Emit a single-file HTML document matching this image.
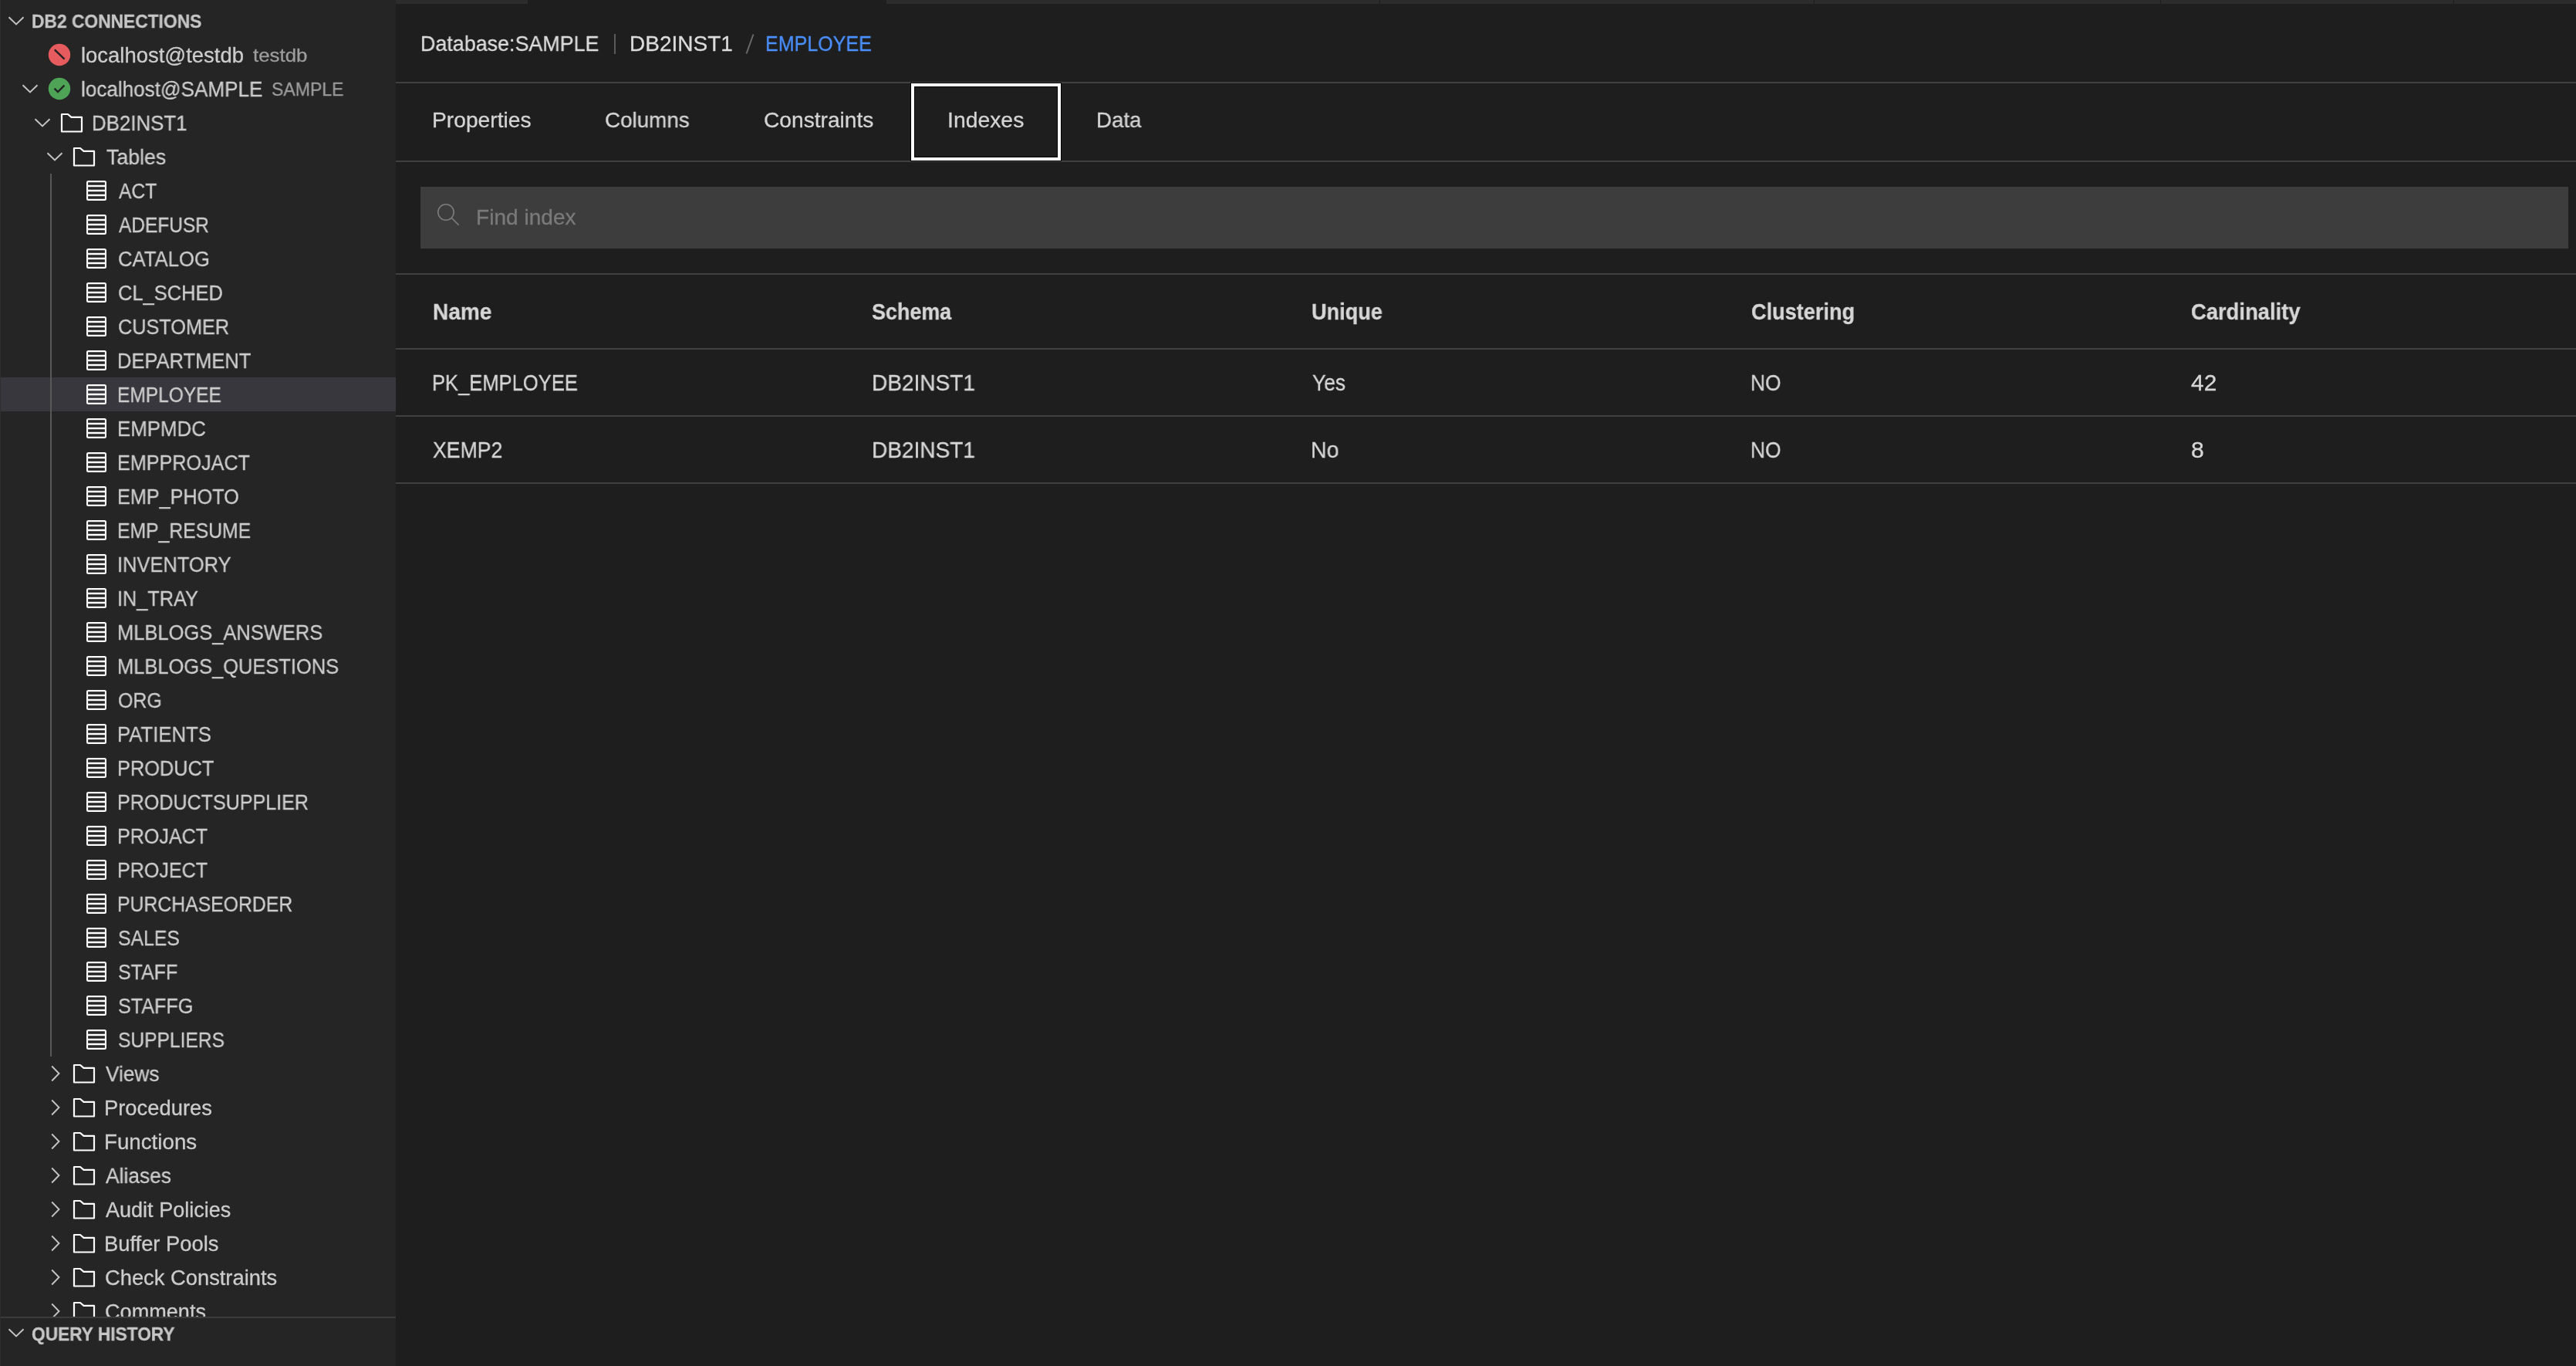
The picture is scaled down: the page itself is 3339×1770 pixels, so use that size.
<!DOCTYPE html>
<html><head><meta charset="utf-8"><style>
*{margin:0;padding:0;box-sizing:border-box}
html,body{width:3339px;height:1770px;overflow:hidden;background:#1e1e1e;font-family:"Liberation Sans",sans-serif}
i{font-style:normal}
.abs{position:absolute;display:block;line-height:0}
.box{position:absolute;display:block}
.t{position:absolute;white-space:nowrap;will-change:transform;-webkit-text-stroke:0.3px currentColor}
#side{position:absolute;left:0;top:0;width:513px;height:1770px;background:#252526;overflow:hidden}
#sideb{position:absolute;left:0;top:0;width:1px;height:1770px;background:#2f2f2f}
#tree{position:absolute;left:0;top:0;width:513px;height:1706px;overflow:hidden}
.row{position:absolute;left:1px;width:512px;height:44px}
.row.sel{background:#37373d}
.row .abs{margin-left:-1px}
.lbl{-webkit-text-stroke:0.3px currentColor;will-change:transform;position:absolute;top:0;height:44px;line-height:44px;font-size:27px;color:#cccccc;padding-top:1px;white-space:nowrap;margin-left:-1px}
.lbl.desc{font-size:24px;color:#9d9d9d}
.hdr{position:absolute;left:0;width:513px;height:44px}
.hdr .h{-webkit-text-stroke:0.3px currentColor;will-change:transform;position:absolute;left:42px;top:0;line-height:44px;font-size:23px;font-weight:bold;color:#c6c6c6;padding-top:1px;white-space:nowrap}
#guide{position:absolute;left:65px;top:225px;width:2px;height:1144px;background:#585858}
#qh{position:absolute;left:0;top:1706px;width:513px;height:64px;border-top:2px solid #3c3c3c}
</style></head><body>
<div id="side">
  <div id="tree">
    <div class="hdr" style="top:5px"><i class="abs" style="left:10px;top:16px"><svg width="22" height="12" viewBox="0 0 22 12"><path d="M1.5 1.2 L11 10.5 L20.5 1.2" fill="none" stroke="#c5c5c5" stroke-width="1.9"/></svg></i><span class="h" style="transform:scaleX(0.991);transform-origin:0 0;margin-left:-1.0px">DB2 CONNECTIONS</span></div>
<div class="row" style="top:49px"><i class="abs" style="left:62px;top:7px"><svg width="30" height="30" viewBox="0 0 30 30"><circle cx="15" cy="15" r="14.2" fill="#e65b5e"/><path d="M8.8 8.4 L21.6 20.6" stroke="#222" stroke-width="2.4"/></svg></i><span class="lbl" style="left:105.0px;transform:scaleX(1.0166);transform-origin:0 0;">localhost@testdb</span><span class="lbl desc" style="left:328.0px;transform:scaleX(1.0769);transform-origin:0 0;">testdb</span></div>
<div class="row" style="top:93px"><i class="abs" style="left:28px;top:16px"><svg width="22" height="12" viewBox="0 0 22 12"><path d="M1.5 1.2 L11 10.5 L20.5 1.2" fill="none" stroke="#c5c5c5" stroke-width="1.9"/></svg></i><i class="abs" style="left:62px;top:7px"><svg width="30" height="30" viewBox="0 0 30 30"><circle cx="15" cy="15" r="14.2" fill="#4ea357"/><path d="M8.6 14.6 L13 19 L21.4 10.6" fill="none" stroke="#222" stroke-width="2.3"/></svg></i><span class="lbl" style="left:105.0px;transform:scaleX(0.9667);transform-origin:0 0;">localhost@SAMPLE</span><span class="lbl desc" style="left:352.4px;transform:scaleX(0.9605);transform-origin:0 0;">SAMPLE</span></div>
<div class="row" style="top:137px"><i class="abs" style="left:44px;top:16px"><svg width="22" height="12" viewBox="0 0 22 12"><path d="M1.5 1.2 L11 10.5 L20.5 1.2" fill="none" stroke="#c5c5c5" stroke-width="1.9"/></svg></i><i class="abs" style="left:78px;top:9px"><svg width="30" height="26" viewBox="0 0 30 26"><path d="M2 2 H10 L14.5 5.8 H28 V24.5 H2 Z" fill="none" stroke="#fff" stroke-width="2.2" stroke-linejoin="round"/></svg></i><span class="lbl" style="left:119.0px;transform:scaleX(0.9572);transform-origin:0 0;">DB2INST1</span></div>
<div class="row" style="top:181px"><i class="abs" style="left:60px;top:16px"><svg width="22" height="12" viewBox="0 0 22 12"><path d="M1.5 1.2 L11 10.5 L20.5 1.2" fill="none" stroke="#c5c5c5" stroke-width="1.9"/></svg></i><i class="abs" style="left:94px;top:9px"><svg width="30" height="26" viewBox="0 0 30 26"><path d="M2 2 H10 L14.5 5.8 H28 V24.5 H2 Z" fill="none" stroke="#fff" stroke-width="2.2" stroke-linejoin="round"/></svg></i><span class="lbl" style="left:137.8px;transform:scaleX(0.9897);transform-origin:0 0;">Tables</span></div>
<div class="row" style="top:225px"><i class="abs" style="left:112px;top:9px"><svg width="26" height="26" viewBox="0 0 26 26"><path fill="#fff" fill-rule="evenodd" d="M2.5 0H23.5A2.5 2.5 0 0 1 26 2.5V23.5A2.5 2.5 0 0 1 23.5 26H2.5A2.5 2.5 0 0 1 0 23.5V2.5A2.5 2.5 0 0 1 2.5 0ZM2.1 2.2H23.9V5.7H2.1ZM2.1 8.2H23.9V11.7H2.1ZM2.1 14.25H23.9V17.7H2.1ZM2.1 20.2H23.9V23.8H2.1Z"/></svg></i><span class="lbl" style="left:154.0px;transform:scaleX(0.9112);transform-origin:0 0;">ACT</span></div>
<div class="row" style="top:269px"><i class="abs" style="left:112px;top:9px"><svg width="26" height="26" viewBox="0 0 26 26"><path fill="#fff" fill-rule="evenodd" d="M2.5 0H23.5A2.5 2.5 0 0 1 26 2.5V23.5A2.5 2.5 0 0 1 23.5 26H2.5A2.5 2.5 0 0 1 0 23.5V2.5A2.5 2.5 0 0 1 2.5 0ZM2.1 2.2H23.9V5.7H2.1ZM2.1 8.2H23.9V11.7H2.1ZM2.1 14.25H23.9V17.7H2.1ZM2.1 20.2H23.9V23.8H2.1Z"/></svg></i><span class="lbl" style="left:154.0px;transform:scaleX(0.9062);transform-origin:0 0;">ADEFUSR</span></div>
<div class="row" style="top:313px"><i class="abs" style="left:112px;top:9px"><svg width="26" height="26" viewBox="0 0 26 26"><path fill="#fff" fill-rule="evenodd" d="M2.5 0H23.5A2.5 2.5 0 0 1 26 2.5V23.5A2.5 2.5 0 0 1 23.5 26H2.5A2.5 2.5 0 0 1 0 23.5V2.5A2.5 2.5 0 0 1 2.5 0ZM2.1 2.2H23.9V5.7H2.1ZM2.1 8.2H23.9V11.7H2.1ZM2.1 14.25H23.9V17.7H2.1ZM2.1 20.2H23.9V23.8H2.1Z"/></svg></i><span class="lbl" style="left:153.0px;transform:scaleX(0.9508);transform-origin:0 0;">CATALOG</span></div>
<div class="row" style="top:357px"><i class="abs" style="left:112px;top:9px"><svg width="26" height="26" viewBox="0 0 26 26"><path fill="#fff" fill-rule="evenodd" d="M2.5 0H23.5A2.5 2.5 0 0 1 26 2.5V23.5A2.5 2.5 0 0 1 23.5 26H2.5A2.5 2.5 0 0 1 0 23.5V2.5A2.5 2.5 0 0 1 2.5 0ZM2.1 2.2H23.9V5.7H2.1ZM2.1 8.2H23.9V11.7H2.1ZM2.1 14.25H23.9V17.7H2.1ZM2.1 20.2H23.9V23.8H2.1Z"/></svg></i><span class="lbl" style="left:153.0px;transform:scaleX(0.9437);transform-origin:0 0;">CL_SCHED</span></div>
<div class="row" style="top:401px"><i class="abs" style="left:112px;top:9px"><svg width="26" height="26" viewBox="0 0 26 26"><path fill="#fff" fill-rule="evenodd" d="M2.5 0H23.5A2.5 2.5 0 0 1 26 2.5V23.5A2.5 2.5 0 0 1 23.5 26H2.5A2.5 2.5 0 0 1 0 23.5V2.5A2.5 2.5 0 0 1 2.5 0ZM2.1 2.2H23.9V5.7H2.1ZM2.1 8.2H23.9V11.7H2.1ZM2.1 14.25H23.9V17.7H2.1ZM2.1 20.2H23.9V23.8H2.1Z"/></svg></i><span class="lbl" style="left:153.0px;transform:scaleX(0.9356);transform-origin:0 0;">CUSTOMER</span></div>
<div class="row" style="top:445px"><i class="abs" style="left:112px;top:9px"><svg width="26" height="26" viewBox="0 0 26 26"><path fill="#fff" fill-rule="evenodd" d="M2.5 0H23.5A2.5 2.5 0 0 1 26 2.5V23.5A2.5 2.5 0 0 1 23.5 26H2.5A2.5 2.5 0 0 1 0 23.5V2.5A2.5 2.5 0 0 1 2.5 0ZM2.1 2.2H23.9V5.7H2.1ZM2.1 8.2H23.9V11.7H2.1ZM2.1 14.25H23.9V17.7H2.1ZM2.1 20.2H23.9V23.8H2.1Z"/></svg></i><span class="lbl" style="left:152.0px;transform:scaleX(0.9448);transform-origin:0 0;">DEPARTMENT</span></div>
<div class="row sel" style="top:489px"><i class="abs" style="left:112px;top:9px"><svg width="26" height="26" viewBox="0 0 26 26"><path fill="#fff" fill-rule="evenodd" d="M2.5 0H23.5A2.5 2.5 0 0 1 26 2.5V23.5A2.5 2.5 0 0 1 23.5 26H2.5A2.5 2.5 0 0 1 0 23.5V2.5A2.5 2.5 0 0 1 2.5 0ZM2.1 2.2H23.9V5.7H2.1ZM2.1 8.2H23.9V11.7H2.1ZM2.1 14.25H23.9V17.7H2.1ZM2.1 20.2H23.9V23.8H2.1Z"/></svg></i><span class="lbl" style="left:152.0px;transform:scaleX(0.9081);transform-origin:0 0;">EMPLOYEE</span></div>
<div class="row" style="top:533px"><i class="abs" style="left:112px;top:9px"><svg width="26" height="26" viewBox="0 0 26 26"><path fill="#fff" fill-rule="evenodd" d="M2.5 0H23.5A2.5 2.5 0 0 1 26 2.5V23.5A2.5 2.5 0 0 1 23.5 26H2.5A2.5 2.5 0 0 1 0 23.5V2.5A2.5 2.5 0 0 1 2.5 0ZM2.1 2.2H23.9V5.7H2.1ZM2.1 8.2H23.9V11.7H2.1ZM2.1 14.25H23.9V17.7H2.1ZM2.1 20.2H23.9V23.8H2.1Z"/></svg></i><span class="lbl" style="left:152.0px;transform:scaleX(0.9572);transform-origin:0 0;">EMPMDC</span></div>
<div class="row" style="top:577px"><i class="abs" style="left:112px;top:9px"><svg width="26" height="26" viewBox="0 0 26 26"><path fill="#fff" fill-rule="evenodd" d="M2.5 0H23.5A2.5 2.5 0 0 1 26 2.5V23.5A2.5 2.5 0 0 1 23.5 26H2.5A2.5 2.5 0 0 1 0 23.5V2.5A2.5 2.5 0 0 1 2.5 0ZM2.1 2.2H23.9V5.7H2.1ZM2.1 8.2H23.9V11.7H2.1ZM2.1 14.25H23.9V17.7H2.1ZM2.1 20.2H23.9V23.8H2.1Z"/></svg></i><span class="lbl" style="left:152.0px;transform:scaleX(0.932);transform-origin:0 0;">EMPPROJACT</span></div>
<div class="row" style="top:621px"><i class="abs" style="left:112px;top:9px"><svg width="26" height="26" viewBox="0 0 26 26"><path fill="#fff" fill-rule="evenodd" d="M2.5 0H23.5A2.5 2.5 0 0 1 26 2.5V23.5A2.5 2.5 0 0 1 23.5 26H2.5A2.5 2.5 0 0 1 0 23.5V2.5A2.5 2.5 0 0 1 2.5 0ZM2.1 2.2H23.9V5.7H2.1ZM2.1 8.2H23.9V11.7H2.1ZM2.1 14.25H23.9V17.7H2.1ZM2.1 20.2H23.9V23.8H2.1Z"/></svg></i><span class="lbl" style="left:152.0px;transform:scaleX(0.9337);transform-origin:0 0;">EMP_PHOTO</span></div>
<div class="row" style="top:665px"><i class="abs" style="left:112px;top:9px"><svg width="26" height="26" viewBox="0 0 26 26"><path fill="#fff" fill-rule="evenodd" d="M2.5 0H23.5A2.5 2.5 0 0 1 26 2.5V23.5A2.5 2.5 0 0 1 23.5 26H2.5A2.5 2.5 0 0 1 0 23.5V2.5A2.5 2.5 0 0 1 2.5 0ZM2.1 2.2H23.9V5.7H2.1ZM2.1 8.2H23.9V11.7H2.1ZM2.1 14.25H23.9V17.7H2.1ZM2.1 20.2H23.9V23.8H2.1Z"/></svg></i><span class="lbl" style="left:152.0px;transform:scaleX(0.9162);transform-origin:0 0;">EMP_RESUME</span></div>
<div class="row" style="top:709px"><i class="abs" style="left:112px;top:9px"><svg width="26" height="26" viewBox="0 0 26 26"><path fill="#fff" fill-rule="evenodd" d="M2.5 0H23.5A2.5 2.5 0 0 1 26 2.5V23.5A2.5 2.5 0 0 1 23.5 26H2.5A2.5 2.5 0 0 1 0 23.5V2.5A2.5 2.5 0 0 1 2.5 0ZM2.1 2.2H23.9V5.7H2.1ZM2.1 8.2H23.9V11.7H2.1ZM2.1 14.25H23.9V17.7H2.1ZM2.1 20.2H23.9V23.8H2.1Z"/></svg></i><span class="lbl" style="left:152.0px;transform:scaleX(0.9429);transform-origin:0 0;">INVENTORY</span></div>
<div class="row" style="top:753px"><i class="abs" style="left:112px;top:9px"><svg width="26" height="26" viewBox="0 0 26 26"><path fill="#fff" fill-rule="evenodd" d="M2.5 0H23.5A2.5 2.5 0 0 1 26 2.5V23.5A2.5 2.5 0 0 1 23.5 26H2.5A2.5 2.5 0 0 1 0 23.5V2.5A2.5 2.5 0 0 1 2.5 0ZM2.1 2.2H23.9V5.7H2.1ZM2.1 8.2H23.9V11.7H2.1ZM2.1 14.25H23.9V17.7H2.1ZM2.1 20.2H23.9V23.8H2.1Z"/></svg></i><span class="lbl" style="left:152.0px;transform:scaleX(0.9364);transform-origin:0 0;">IN_TRAY</span></div>
<div class="row" style="top:797px"><i class="abs" style="left:112px;top:9px"><svg width="26" height="26" viewBox="0 0 26 26"><path fill="#fff" fill-rule="evenodd" d="M2.5 0H23.5A2.5 2.5 0 0 1 26 2.5V23.5A2.5 2.5 0 0 1 23.5 26H2.5A2.5 2.5 0 0 1 0 23.5V2.5A2.5 2.5 0 0 1 2.5 0ZM2.1 2.2H23.9V5.7H2.1ZM2.1 8.2H23.9V11.7H2.1ZM2.1 14.25H23.9V17.7H2.1ZM2.1 20.2H23.9V23.8H2.1Z"/></svg></i><span class="lbl" style="left:152.0px;transform:scaleX(0.9442);transform-origin:0 0;">MLBLOGS_ANSWERS</span></div>
<div class="row" style="top:841px"><i class="abs" style="left:112px;top:9px"><svg width="26" height="26" viewBox="0 0 26 26"><path fill="#fff" fill-rule="evenodd" d="M2.5 0H23.5A2.5 2.5 0 0 1 26 2.5V23.5A2.5 2.5 0 0 1 23.5 26H2.5A2.5 2.5 0 0 1 0 23.5V2.5A2.5 2.5 0 0 1 2.5 0ZM2.1 2.2H23.9V5.7H2.1ZM2.1 8.2H23.9V11.7H2.1ZM2.1 14.25H23.9V17.7H2.1ZM2.1 20.2H23.9V23.8H2.1Z"/></svg></i><span class="lbl" style="left:152.0px;transform:scaleX(0.943);transform-origin:0 0;">MLBLOGS_QUESTIONS</span></div>
<div class="row" style="top:885px"><i class="abs" style="left:112px;top:9px"><svg width="26" height="26" viewBox="0 0 26 26"><path fill="#fff" fill-rule="evenodd" d="M2.5 0H23.5A2.5 2.5 0 0 1 26 2.5V23.5A2.5 2.5 0 0 1 23.5 26H2.5A2.5 2.5 0 0 1 0 23.5V2.5A2.5 2.5 0 0 1 2.5 0ZM2.1 2.2H23.9V5.7H2.1ZM2.1 8.2H23.9V11.7H2.1ZM2.1 14.25H23.9V17.7H2.1ZM2.1 20.2H23.9V23.8H2.1Z"/></svg></i><span class="lbl" style="left:153.0px;transform:scaleX(0.9221);transform-origin:0 0;">ORG</span></div>
<div class="row" style="top:929px"><i class="abs" style="left:112px;top:9px"><svg width="26" height="26" viewBox="0 0 26 26"><path fill="#fff" fill-rule="evenodd" d="M2.5 0H23.5A2.5 2.5 0 0 1 26 2.5V23.5A2.5 2.5 0 0 1 23.5 26H2.5A2.5 2.5 0 0 1 0 23.5V2.5A2.5 2.5 0 0 1 2.5 0ZM2.1 2.2H23.9V5.7H2.1ZM2.1 8.2H23.9V11.7H2.1ZM2.1 14.25H23.9V17.7H2.1ZM2.1 20.2H23.9V23.8H2.1Z"/></svg></i><span class="lbl" style="left:152.0px;transform:scaleX(0.952);transform-origin:0 0;">PATIENTS</span></div>
<div class="row" style="top:973px"><i class="abs" style="left:112px;top:9px"><svg width="26" height="26" viewBox="0 0 26 26"><path fill="#fff" fill-rule="evenodd" d="M2.5 0H23.5A2.5 2.5 0 0 1 26 2.5V23.5A2.5 2.5 0 0 1 23.5 26H2.5A2.5 2.5 0 0 1 0 23.5V2.5A2.5 2.5 0 0 1 2.5 0ZM2.1 2.2H23.9V5.7H2.1ZM2.1 8.2H23.9V11.7H2.1ZM2.1 14.25H23.9V17.7H2.1ZM2.1 20.2H23.9V23.8H2.1Z"/></svg></i><span class="lbl" style="left:152.0px;transform:scaleX(0.9389);transform-origin:0 0;">PRODUCT</span></div>
<div class="row" style="top:1017px"><i class="abs" style="left:112px;top:9px"><svg width="26" height="26" viewBox="0 0 26 26"><path fill="#fff" fill-rule="evenodd" d="M2.5 0H23.5A2.5 2.5 0 0 1 26 2.5V23.5A2.5 2.5 0 0 1 23.5 26H2.5A2.5 2.5 0 0 1 0 23.5V2.5A2.5 2.5 0 0 1 2.5 0ZM2.1 2.2H23.9V5.7H2.1ZM2.1 8.2H23.9V11.7H2.1ZM2.1 14.25H23.9V17.7H2.1ZM2.1 20.2H23.9V23.8H2.1Z"/></svg></i><span class="lbl" style="left:152.0px;transform:scaleX(0.9287);transform-origin:0 0;">PRODUCTSUPPLIER</span></div>
<div class="row" style="top:1061px"><i class="abs" style="left:112px;top:9px"><svg width="26" height="26" viewBox="0 0 26 26"><path fill="#fff" fill-rule="evenodd" d="M2.5 0H23.5A2.5 2.5 0 0 1 26 2.5V23.5A2.5 2.5 0 0 1 23.5 26H2.5A2.5 2.5 0 0 1 0 23.5V2.5A2.5 2.5 0 0 1 2.5 0ZM2.1 2.2H23.9V5.7H2.1ZM2.1 8.2H23.9V11.7H2.1ZM2.1 14.25H23.9V17.7H2.1ZM2.1 20.2H23.9V23.8H2.1Z"/></svg></i><span class="lbl" style="left:152.0px;transform:scaleX(0.9291);transform-origin:0 0;">PROJACT</span></div>
<div class="row" style="top:1105px"><i class="abs" style="left:112px;top:9px"><svg width="26" height="26" viewBox="0 0 26 26"><path fill="#fff" fill-rule="evenodd" d="M2.5 0H23.5A2.5 2.5 0 0 1 26 2.5V23.5A2.5 2.5 0 0 1 23.5 26H2.5A2.5 2.5 0 0 1 0 23.5V2.5A2.5 2.5 0 0 1 2.5 0ZM2.1 2.2H23.9V5.7H2.1ZM2.1 8.2H23.9V11.7H2.1ZM2.1 14.25H23.9V17.7H2.1ZM2.1 20.2H23.9V23.8H2.1Z"/></svg></i><span class="lbl" style="left:152.0px;transform:scaleX(0.9291);transform-origin:0 0;">PROJECT</span></div>
<div class="row" style="top:1149px"><i class="abs" style="left:112px;top:9px"><svg width="26" height="26" viewBox="0 0 26 26"><path fill="#fff" fill-rule="evenodd" d="M2.5 0H23.5A2.5 2.5 0 0 1 26 2.5V23.5A2.5 2.5 0 0 1 23.5 26H2.5A2.5 2.5 0 0 1 0 23.5V2.5A2.5 2.5 0 0 1 2.5 0ZM2.1 2.2H23.9V5.7H2.1ZM2.1 8.2H23.9V11.7H2.1ZM2.1 14.25H23.9V17.7H2.1ZM2.1 20.2H23.9V23.8H2.1Z"/></svg></i><span class="lbl" style="left:152.0px;transform:scaleX(0.9181);transform-origin:0 0;">PURCHASEORDER</span></div>
<div class="row" style="top:1193px"><i class="abs" style="left:112px;top:9px"><svg width="26" height="26" viewBox="0 0 26 26"><path fill="#fff" fill-rule="evenodd" d="M2.5 0H23.5A2.5 2.5 0 0 1 26 2.5V23.5A2.5 2.5 0 0 1 23.5 26H2.5A2.5 2.5 0 0 1 0 23.5V2.5A2.5 2.5 0 0 1 2.5 0ZM2.1 2.2H23.9V5.7H2.1ZM2.1 8.2H23.9V11.7H2.1ZM2.1 14.25H23.9V17.7H2.1ZM2.1 20.2H23.9V23.8H2.1Z"/></svg></i><span class="lbl" style="left:153.0px;transform:scaleX(0.9178);transform-origin:0 0;">SALES</span></div>
<div class="row" style="top:1237px"><i class="abs" style="left:112px;top:9px"><svg width="26" height="26" viewBox="0 0 26 26"><path fill="#fff" fill-rule="evenodd" d="M2.5 0H23.5A2.5 2.5 0 0 1 26 2.5V23.5A2.5 2.5 0 0 1 23.5 26H2.5A2.5 2.5 0 0 1 0 23.5V2.5A2.5 2.5 0 0 1 2.5 0ZM2.1 2.2H23.9V5.7H2.1ZM2.1 8.2H23.9V11.7H2.1ZM2.1 14.25H23.9V17.7H2.1ZM2.1 20.2H23.9V23.8H2.1Z"/></svg></i><span class="lbl" style="left:153.0px;transform:scaleX(0.9245);transform-origin:0 0;">STAFF</span></div>
<div class="row" style="top:1281px"><i class="abs" style="left:112px;top:9px"><svg width="26" height="26" viewBox="0 0 26 26"><path fill="#fff" fill-rule="evenodd" d="M2.5 0H23.5A2.5 2.5 0 0 1 26 2.5V23.5A2.5 2.5 0 0 1 23.5 26H2.5A2.5 2.5 0 0 1 0 23.5V2.5A2.5 2.5 0 0 1 2.5 0ZM2.1 2.2H23.9V5.7H2.1ZM2.1 8.2H23.9V11.7H2.1ZM2.1 14.25H23.9V17.7H2.1ZM2.1 20.2H23.9V23.8H2.1Z"/></svg></i><span class="lbl" style="left:153.0px;transform:scaleX(0.9314);transform-origin:0 0;">STAFFG</span></div>
<div class="row" style="top:1325px"><i class="abs" style="left:112px;top:9px"><svg width="26" height="26" viewBox="0 0 26 26"><path fill="#fff" fill-rule="evenodd" d="M2.5 0H23.5A2.5 2.5 0 0 1 26 2.5V23.5A2.5 2.5 0 0 1 23.5 26H2.5A2.5 2.5 0 0 1 0 23.5V2.5A2.5 2.5 0 0 1 2.5 0ZM2.1 2.2H23.9V5.7H2.1ZM2.1 8.2H23.9V11.7H2.1ZM2.1 14.25H23.9V17.7H2.1ZM2.1 20.2H23.9V23.8H2.1Z"/></svg></i><span class="lbl" style="left:153.0px;transform:scaleX(0.9107);transform-origin:0 0;">SUPPLIERS</span></div>
<div class="row" style="top:1369px"><i class="abs" style="left:66px;top:11px"><svg width="12" height="22" viewBox="0 0 12 22"><path d="M1.2 1.5 L10.5 11 L1.2 20.5" fill="none" stroke="#c5c5c5" stroke-width="1.9"/></svg></i><i class="abs" style="left:94px;top:9px"><svg width="30" height="26" viewBox="0 0 30 26"><path d="M2 2 H10 L14.5 5.8 H28 V24.5 H2 Z" fill="none" stroke="#fff" stroke-width="2.2" stroke-linejoin="round"/></svg></i><span class="lbl" style="left:137.0px;transform:scaleX(0.9719);transform-origin:0 0;">Views</span></div>
<div class="row" style="top:1413px"><i class="abs" style="left:66px;top:11px"><svg width="12" height="22" viewBox="0 0 12 22"><path d="M1.2 1.5 L10.5 11 L1.2 20.5" fill="none" stroke="#c5c5c5" stroke-width="1.9"/></svg></i><i class="abs" style="left:94px;top:9px"><svg width="30" height="26" viewBox="0 0 30 26"><path d="M2 2 H10 L14.5 5.8 H28 V24.5 H2 Z" fill="none" stroke="#fff" stroke-width="2.2" stroke-linejoin="round"/></svg></i><span class="lbl" style="left:135.0px;transform:scaleX(1.0134);transform-origin:0 0;">Procedures</span></div>
<div class="row" style="top:1457px"><i class="abs" style="left:66px;top:11px"><svg width="12" height="22" viewBox="0 0 12 22"><path d="M1.2 1.5 L10.5 11 L1.2 20.5" fill="none" stroke="#c5c5c5" stroke-width="1.9"/></svg></i><i class="abs" style="left:94px;top:9px"><svg width="30" height="26" viewBox="0 0 30 26"><path d="M2 2 H10 L14.5 5.8 H28 V24.5 H2 Z" fill="none" stroke="#fff" stroke-width="2.2" stroke-linejoin="round"/></svg></i><span class="lbl" style="left:135.0px;transform:scaleX(1.0264);transform-origin:0 0;">Functions</span></div>
<div class="row" style="top:1501px"><i class="abs" style="left:66px;top:11px"><svg width="12" height="22" viewBox="0 0 12 22"><path d="M1.2 1.5 L10.5 11 L1.2 20.5" fill="none" stroke="#c5c5c5" stroke-width="1.9"/></svg></i><i class="abs" style="left:94px;top:9px"><svg width="30" height="26" viewBox="0 0 30 26"><path d="M2 2 H10 L14.5 5.8 H28 V24.5 H2 Z" fill="none" stroke="#fff" stroke-width="2.2" stroke-linejoin="round"/></svg></i><span class="lbl" style="left:137.0px;transform:scaleX(0.9768);transform-origin:0 0;">Aliases</span></div>
<div class="row" style="top:1545px"><i class="abs" style="left:66px;top:11px"><svg width="12" height="22" viewBox="0 0 12 22"><path d="M1.2 1.5 L10.5 11 L1.2 20.5" fill="none" stroke="#c5c5c5" stroke-width="1.9"/></svg></i><i class="abs" style="left:94px;top:9px"><svg width="30" height="26" viewBox="0 0 30 26"><path d="M2 2 H10 L14.5 5.8 H28 V24.5 H2 Z" fill="none" stroke="#fff" stroke-width="2.2" stroke-linejoin="round"/></svg></i><span class="lbl" style="left:137.0px;transform:scaleX(1.0014);transform-origin:0 0;">Audit Policies</span></div>
<div class="row" style="top:1589px"><i class="abs" style="left:66px;top:11px"><svg width="12" height="22" viewBox="0 0 12 22"><path d="M1.2 1.5 L10.5 11 L1.2 20.5" fill="none" stroke="#c5c5c5" stroke-width="1.9"/></svg></i><i class="abs" style="left:94px;top:9px"><svg width="30" height="26" viewBox="0 0 30 26"><path d="M2 2 H10 L14.5 5.8 H28 V24.5 H2 Z" fill="none" stroke="#fff" stroke-width="2.2" stroke-linejoin="round"/></svg></i><span class="lbl" style="left:135.0px;transform:scaleX(1.0126);transform-origin:0 0;">Buffer Pools</span></div>
<div class="row" style="top:1633px"><i class="abs" style="left:66px;top:11px"><svg width="12" height="22" viewBox="0 0 12 22"><path d="M1.2 1.5 L10.5 11 L1.2 20.5" fill="none" stroke="#c5c5c5" stroke-width="1.9"/></svg></i><i class="abs" style="left:94px;top:9px"><svg width="30" height="26" viewBox="0 0 30 26"><path d="M2 2 H10 L14.5 5.8 H28 V24.5 H2 Z" fill="none" stroke="#fff" stroke-width="2.2" stroke-linejoin="round"/></svg></i><span class="lbl" style="left:136.0px;transform:scaleX(1.0117);transform-origin:0 0;">Check Constraints</span></div>
<div class="row" style="top:1677px"><i class="abs" style="left:66px;top:11px"><svg width="12" height="22" viewBox="0 0 12 22"><path d="M1.2 1.5 L10.5 11 L1.2 20.5" fill="none" stroke="#c5c5c5" stroke-width="1.9"/></svg></i><i class="abs" style="left:94px;top:9px"><svg width="30" height="26" viewBox="0 0 30 26"><path d="M2 2 H10 L14.5 5.8 H28 V24.5 H2 Z" fill="none" stroke="#fff" stroke-width="2.2" stroke-linejoin="round"/></svg></i><span class="lbl" style="left:136.0px;transform:scaleX(1.0032);transform-origin:0 0;">Comments</span></div>
    <div id="guide"></div>
  </div>
  <div id="qh"><div class="hdr" style="top:-2px;height:44px"><i class="abs" style="left:10px;top:15px"><svg width="22" height="12" viewBox="0 0 22 12"><path d="M1.5 1.2 L11 10.5 L20.5 1.2" fill="none" stroke="#c5c5c5" stroke-width="1.9"/></svg></i><span class="h" style="transform:scaleX(0.9871);transform-origin:0 0;margin-left:-1.4px">QUERY HISTORY</span></div></div>
  <div id="sideb"></div>
</div>
<div class="box" style="left:513px;top:0;width:171px;height:5px;background:#2c2c2c"></div>
<div class="box" style="left:1149px;top:0;width:639px;height:5px;background:#2c2c2c"></div>
<div class="box" style="left:1789px;top:0;width:562px;height:5px;background:#2c2c2c"></div>
<div class="box" style="left:2352px;top:0;width:448px;height:5px;background:#2c2c2c"></div>
<div class="box" style="left:2801px;top:0;width:379px;height:5px;background:#2c2c2c"></div>
<div class="box" style="left:3181px;top:0;width:158px;height:5px;background:#2c2c2c"></div>
<span class="t" style="left:544.6px;top:43.10px;font-size:28px;line-height:28px;color:#dcdcdc;transform:scaleX(0.9596);transform-origin:0 0;">Database:SAMPLE</span>
<div class="box" style="left:796px;top:44px;width:2px;height:26px;background:#5a5a5a"></div>
<span class="t" style="left:816.0px;top:43.10px;font-size:28px;line-height:28px;color:#dcdcdc;transform:scaleX(1.0);transform-origin:0 0;">DB2INST1</span>
<svg class="box" style="left:960px;top:40px" width="24" height="34" viewBox="0 0 24 34"><path d="M16.5 4.5 L7.5 29.5" stroke="#6a6a6a" stroke-width="2"/></svg>
<span class="t" style="left:992.0px;top:43.10px;font-size:28px;line-height:28px;color:#4a90ff;transform:scaleX(0.894);transform-origin:0 0;">EMPLOYEE</span>
<div class="box" style="left:513px;top:106px;width:2826px;height:2px;background:#404040"></div>
<div class="box" style="left:513px;top:208px;width:2826px;height:2px;background:#404040"></div>
<div class="box" style="left:513px;top:354px;width:2826px;height:2px;background:#404040"></div>
<div class="box" style="left:513px;top:451px;width:2826px;height:2px;background:#404040"></div>
<div class="box" style="left:513px;top:538px;width:2826px;height:2px;background:#404040"></div>
<div class="box" style="left:513px;top:625px;width:2826px;height:2px;background:#404040"></div>
<span class="t" style="left:560.0px;top:142.10px;font-size:28px;line-height:28px;color:#d4d4d4;transform:scaleX(1.008);transform-origin:0 0;">Properties</span>
<span class="t" style="left:784.0px;top:142.10px;font-size:28px;line-height:28px;color:#d4d4d4;transform:scaleX(0.9928);transform-origin:0 0;">Columns</span>
<span class="t" style="left:990.0px;top:142.10px;font-size:28px;line-height:28px;color:#d4d4d4;transform:scaleX(1.0058);transform-origin:0 0;">Constraints</span>
<span class="t" style="left:1228.0px;top:142.10px;font-size:28px;line-height:28px;color:#d4d4d4;transform:scaleX(1.0127);transform-origin:0 0;">Indexes</span>
<span class="t" style="left:1421.4px;top:142.10px;font-size:28px;line-height:28px;color:#d4d4d4;transform:scaleX(0.9898);transform-origin:0 0;">Data</span>
<div class="box" style="left:1180px;top:107px;width:196px;height:102px;border:1px solid #000"></div>
<div class="box" style="left:1181px;top:108px;width:194px;height:100px;border:4px solid #fff"></div>
<div class="box" style="left:1185px;top:112px;width:186px;height:92px;border:1px solid #000"></div>
<div class="box" style="left:545px;top:242px;width:2784px;height:80px;background:#3d3d3d"></div>
<svg class="box" style="left:560px;top:256px" width="44" height="44" viewBox="0 0 44 44"><circle cx="18" cy="19" r="10.2" fill="none" stroke="#7c7c7c" stroke-width="1.6"/><path d="M25.2 26.2 L34.6 35.6" stroke="#7c7c7c" stroke-width="1.6"/></svg>
<span class="t" style="left:616.6px;top:268.10px;font-size:28px;line-height:28px;color:#7a7a7a;transform:scaleX(1.0032);transform-origin:0 0;">Find index</span>
<span class="t" style="left:561.4px;top:390.25px;font-size:29px;line-height:29px;color:#d6d6d6;transform:scaleX(0.9688);transform-origin:0 0;font-weight:bold;">Name</span>
<span class="t" style="left:1130.0px;top:390.25px;font-size:29px;line-height:29px;color:#d6d6d6;transform:scaleX(0.9279);transform-origin:0 0;font-weight:bold;">Schema</span>
<span class="t" style="left:1700.0px;top:390.25px;font-size:29px;line-height:29px;color:#d6d6d6;transform:scaleX(0.934);transform-origin:0 0;font-weight:bold;">Unique</span>
<span class="t" style="left:2270.0px;top:390.25px;font-size:29px;line-height:29px;color:#d6d6d6;transform:scaleX(0.9348);transform-origin:0 0;font-weight:bold;">Clustering</span>
<span class="t" style="left:2839.6px;top:390.25px;font-size:29px;line-height:29px;color:#d6d6d6;transform:scaleX(0.9449);transform-origin:0 0;font-weight:bold;">Cardinality</span>
<span class="t" style="left:560.4px;top:482.25px;font-size:29px;line-height:29px;color:#d6d6d6;transform:scaleX(0.881);transform-origin:0 0;">PK_EMPLOYEE</span>
<span class="t" style="left:1130.4px;top:482.25px;font-size:29px;line-height:29px;color:#d6d6d6;transform:scaleX(0.9661);transform-origin:0 0;">DB2INST1</span>
<span class="t" style="left:1700.6px;top:482.25px;font-size:29px;line-height:29px;color:#d6d6d6;transform:scaleX(0.9108);transform-origin:0 0;">Yes</span>
<span class="t" style="left:2269.0px;top:482.25px;font-size:29px;line-height:29px;color:#d6d6d6;transform:scaleX(0.9076);transform-origin:0 0;">NO</span>
<span class="t" style="left:2840.2px;top:482.25px;font-size:29px;line-height:29px;color:#d6d6d6;transform:scaleX(1.0323);transform-origin:0 0;">42</span>
<span class="t" style="left:560.6px;top:569.25px;font-size:29px;line-height:29px;color:#d6d6d6;transform:scaleX(0.9187);transform-origin:0 0;">XEMP2</span>
<span class="t" style="left:1130.4px;top:569.25px;font-size:29px;line-height:29px;color:#d6d6d6;transform:scaleX(0.9661);transform-origin:0 0;">DB2INST1</span>
<span class="t" style="left:1699.0px;top:569.25px;font-size:29px;line-height:29px;color:#d6d6d6;transform:scaleX(0.9827);transform-origin:0 0;">No</span>
<span class="t" style="left:2269.0px;top:569.25px;font-size:29px;line-height:29px;color:#d6d6d6;transform:scaleX(0.9076);transform-origin:0 0;">NO</span>
<span class="t" style="left:2839.6px;top:569.25px;font-size:29px;line-height:29px;color:#d6d6d6;transform:scaleX(1.0432);transform-origin:0 0;">8</span>
</body></html>
